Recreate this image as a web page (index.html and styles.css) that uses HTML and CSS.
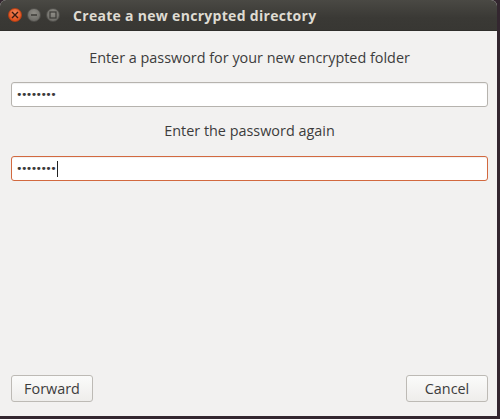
FILE: index.html
```html
<!DOCTYPE html>
<html>
<head>
<meta charset="utf-8">
<link rel="stylesheet" href="styles.css">
</head>
<body>
<div class="window">
  <div class="titlebar">
    <div class="controls">
      <span class="btn close"><svg width="8" height="8" viewBox="0 0 8 8"><path d="M1 1L7 7M7 1L1 7" stroke="#3a1a10" stroke-width="1.4"/></svg></span>
      <span class="btn min"><svg width="8" height="8" viewBox="0 0 8 8"><path d="M1 4H7" stroke="#3c3b37" stroke-width="1.4"/></svg></span>
      <span class="btn max"><svg width="8" height="8" viewBox="0 0 8 8"><rect x="1" y="1" width="6" height="6" fill="none" stroke="#3c3b37" stroke-width="1.2"/></svg></span>
    </div>
    <div class="title">Create a new encrypted directory</div>
  </div>
  <div class="content">
    <div class="label first">Enter a password for your new encrypted folder</div>
    <div class="entry">••••••••</div>
    <div class="label second">Enter the password again</div>
    <div class="entry focused">••••••••<span class="caret"></span></div>
    <div class="spacer"></div>
    <div class="actions">
      <div class="button">Forward</div>
      <div class="button">Cancel</div>
    </div>
  </div>
</div>
</body>
</html>
```
FILE: styles.css
```css
html, body {
  margin: 0;
  padding: 0;
}
body {
  background: #33262f;
  width: 500px;
  height: 419px;
  overflow: hidden;
  font-family: "Open Sans", "Noto Sans", sans-serif;
}
.window {
  width: 497px;
  height: 416px;
  display: flex;
  flex-direction: column;
  border-radius: 6px 6px 0 0;
  overflow: hidden;
  background: #f2f1f0;
}
.titlebar {
  height: 31px;
  flex: none;
  display: flex;
  align-items: center;
  background: linear-gradient(#4a4944, #3a3935 60%, #383733);
  border-bottom: 1px solid #2f2e2b;
  box-sizing: border-box;
}
.controls {
  display: flex;
  align-items: center;
  gap: 5px;
  padding-left: 8px;
  width: 65px;
}
.btn {
  width: 14px;
  height: 14px;
  border-radius: 50%;
  display: flex;
  align-items: center;
  justify-content: center;
  box-sizing: border-box;
}
.close {
  background: radial-gradient(circle at 50% 35%, #f58a5e, #e2521f 70%);
  border: 1px solid #b54014;
}
.min, .max {
  background: radial-gradient(circle at 50% 35%, #8e8c86, #6f6e69 75%);
  border: 1px solid #4f4e4a;
}
.title {
  color: #dfdbd2;
  font-weight: bold;
  font-size: 14px;
  letter-spacing: 0.3px;
}
.content {
  flex: 1;
  display: flex;
  flex-direction: column;
  padding: 17px 9px 14px 11px;
}
.label {
  text-align: center;
  font-size: 14.4px;
  line-height: 20px;
  color: #3c3c3c;
}
.label.first { margin-bottom: 14px; }
.label.second { margin: 14px 0 15px; }
.entry {
  height: 25px;
  box-sizing: border-box;
  border: 1px solid #b6b3ae;
  border-radius: 3px;
  background: #ffffff;
  padding-left: 4px;
  display: flex;
  align-items: center;
  font-family: "DejaVu Sans", sans-serif;
  font-size: 11px;
  letter-spacing: -1.6px;
  color: #3a3a3a;
  box-shadow: inset 0 1px 1px rgba(0,0,0,0.06);
}
.entry.focused {
  border-color: #d2693f;
}
.caret {
  display: inline-block;
  width: 1px;
  height: 16px;
  background: #222;
  margin-left: 2px;
}
.spacer { flex: 1; }
.actions {
  display: flex;
  justify-content: space-between;
}
.button {
  width: 82px;
  height: 27px;
  box-sizing: border-box;
  border: 1px solid #bdbab5;
  border-radius: 3px;
  background: linear-gradient(#fbfbfa, #eeedeb);
  display: flex;
  align-items: center;
  justify-content: center;
  font-size: 14.4px;
  color: #3c3c3c;
}
```
